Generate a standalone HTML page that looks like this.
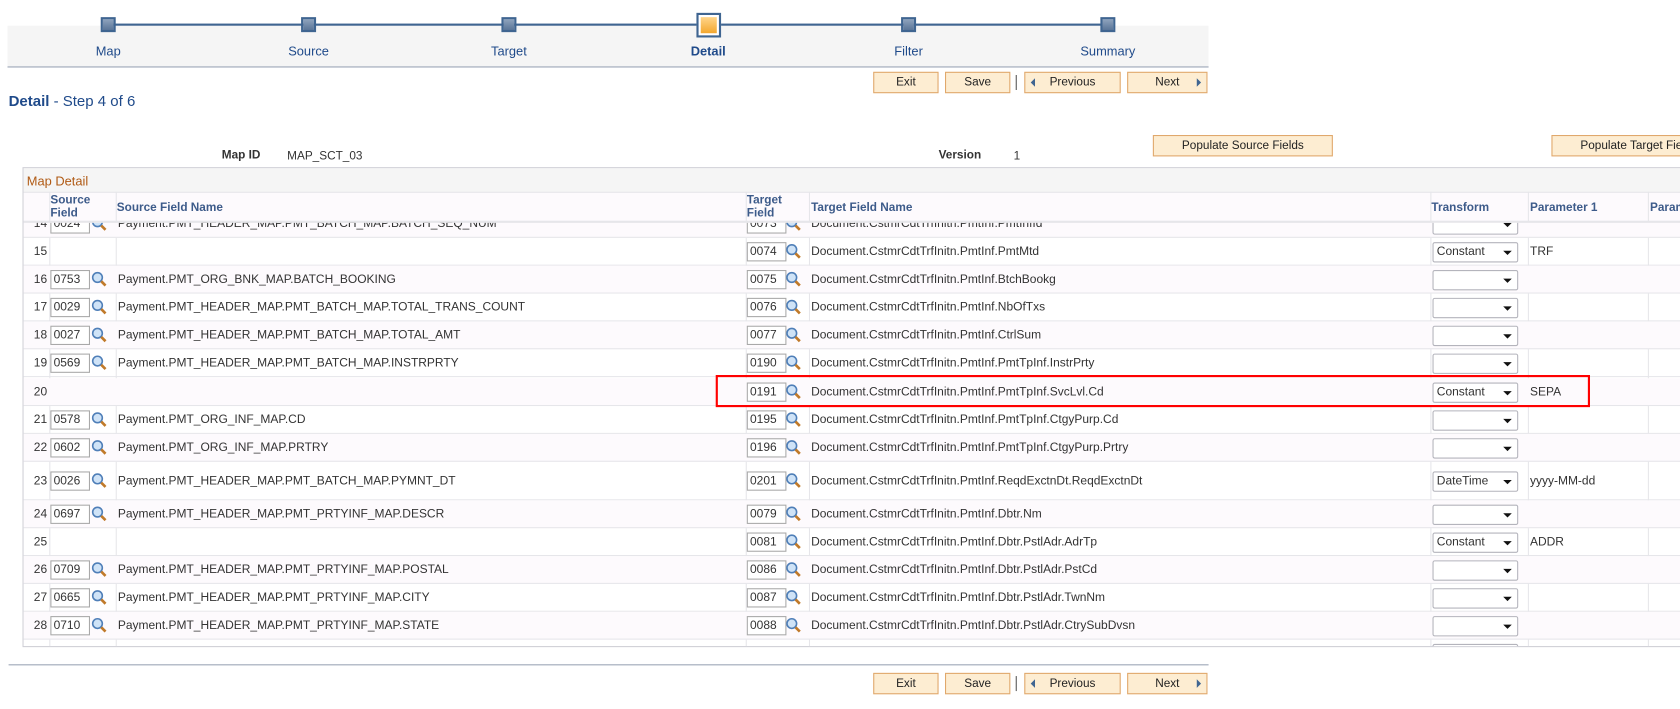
<!DOCTYPE html>
<html><head><meta charset="utf-8">
<style>
*{box-sizing:border-box;margin:0;padding:0}
body{width:1680px;height:709px;background:#fff;font-family:"Liberation Sans",Arial,sans-serif;font-size:11px;color:#333;position:relative;overflow:hidden}
#w{position:absolute;left:0;top:0;width:1568px;height:662px;transform:scale(1.07143);transform-origin:0 0;overflow:hidden}
.a{position:absolute;white-space:nowrap}
.band{left:7px;top:24px;width:1121px;height:39px;background:#f5f5f5;border-bottom:1px solid #9aa3b5}
.line{left:101px;top:22px;width:934px;height:2px;background:#3f6591}
.node{width:14px;height:14px;background:linear-gradient(#8fa3bd,#5a7598);border:2px solid #3f6591;top:16px}
.lbl{top:41px;font-size:12px;color:#1f4a8a;width:120px;text-align:center}
.btn{height:20px;background:#fdedd2;border:1px solid #e0a86c;font-size:11px;color:#222;text-align:center;line-height:18px}
.hdr{font-weight:bold;color:#3d5b8a;font-size:11px;line-height:12px}
.row{left:22px;width:1658px;height:26px;border-bottom:1px solid #e6e6ea}
.row.alt{background:#fdfafd}
.row span{position:absolute;top:7px;font-size:11.2px;white-space:nowrap}
.num{left:0;width:22px;text-align:right}
.in{position:absolute;top:4px;width:37px;height:18px;border:1px solid #a9a9a9;background:#fff;font-size:11.2px;padding-left:2px;line-height:16px}
.mg{position:absolute;top:5px;width:15px;height:15px}
.sel{position:absolute;left:1315px;top:4px;width:80px;height:19px;border:1px solid #b4b4bc;border-radius:2px;background:#fff;font-size:11.2px;line-height:17px;padding-left:3px}
.sel:after{content:"";position:absolute;right:5px;top:7px;border-left:4px solid transparent;border-right:4px solid transparent;border-top:4px solid #111}
</style></head><body>
<div id="w">
<div class="a band"></div>
<div class="a line"></div>
<div class="a node" style="left:94px"></div>
<div class="a node" style="left:281px"></div>
<div class="a node" style="left:468px"></div>
<div class="a" style="left:650px;top:12px;width:23px;height:23px;border:2px solid #3f6591;background:#fff;padding:2px"><div style="width:15px;height:15px;background:linear-gradient(#ffd58a,#f3a72e)"></div></div>
<div class="a node" style="left:841px"></div>
<div class="a node" style="left:1027px"></div>
<div class="a lbl" style="left:41px">Map</div>
<div class="a lbl" style="left:228px">Source</div>
<div class="a lbl" style="left:415px">Target</div>
<div class="a lbl" style="left:601px;font-weight:bold">Detail</div>
<div class="a lbl" style="left:788px">Filter</div>
<div class="a lbl" style="left:974px">Summary</div>

<div class="a btn" style="left:815px;top:67px;width:61px">Exit</div>
<div class="a btn" style="left:882px;top:67px;width:61px">Save</div>
<div class="a" style="left:948px;top:70px;width:1px;height:14px;background:#555"></div>
<div class="a btn" style="left:956px;top:67px;width:90px"><span style="position:absolute;left:5px;top:5px;border-top:4px solid transparent;border-bottom:4px solid transparent;border-right:4px solid #3f6591"></span>Previous</div>
<div class="a btn" style="left:1052px;top:67px;width:75px">Next<span style="position:absolute;right:5px;top:5px;border-top:4px solid transparent;border-bottom:4px solid transparent;border-left:4px solid #3f6591"></span></div>

<div class="a" style="left:8px;top:86px;font-size:14px;color:#1f4a8a"><b>Detail</b> - Step 4 of 6</div>

<div class="a" style="left:207px;top:139px;font-weight:bold;font-size:11px">Map ID</div>
<div class="a" style="left:268px;top:140px;font-size:11px">MAP_SCT_03</div>
<div class="a" style="left:876px;top:139px;font-weight:bold;font-size:11px">Version</div>
<div class="a" style="left:946px;top:140px;font-size:11px">1</div>
<div class="a btn" style="left:1076px;top:126px;width:168px">Populate Source Fields</div>
<div class="a btn" style="left:1448px;top:126px;width:240px;text-align:left;padding-left:26px">Populate Target Fields</div>

<div class="a" style="left:21px;top:156px;width:1660px;height:448px;border:1px solid #cfcfd6;overflow:hidden">
 <div class="a" style="left:0;top:0;width:1660px;height:23px;background:#f5f5f5;border-bottom:1px solid #e3e3e8"></div>
 <div class="a" style="left:3px;top:5px;font-size:12px;color:#b05a14">Map Detail</div>
 <div class="a" style="left:0;top:23px;width:1660px;height:29px;background:#fdfafd;border-bottom:3px solid #e6e6ea"></div>
</div>
<div class="a hdr" style="left:47px;top:181px">Source<br>Field</div>
<div class="a hdr" style="left:109px;top:188px">Source Field Name</div>
<div class="a hdr" style="left:697px;top:181px">Target<br>Field</div>
<div class="a hdr" style="left:757px;top:188px">Target Field Name</div>
<div class="a hdr" style="left:1336px;top:188px">Transform</div>
<div class="a hdr" style="left:1428px;top:188px">Parameter 1</div>
<div class="a hdr" style="left:1540px;top:188px">Parameter 2</div>
<div class="a" style="left:46px;top:179px;width:1px;height:424px;background:#e6e6ea"></div>
<div class="a" style="left:108px;top:179px;width:1px;height:424px;background:#e6e6ea"></div>
<div class="a" style="left:696px;top:179px;width:1px;height:424px;background:#e6e6ea"></div>
<div class="a" style="left:755px;top:179px;width:1px;height:424px;background:#e6e6ea"></div>
<div class="a" style="left:1335px;top:179px;width:1px;height:424px;background:#e6e6ea"></div>
<div class="a" style="left:1426px;top:179px;width:1px;height:424px;background:#e6e6ea"></div>
<div class="a" style="left:1538px;top:179px;width:1px;height:424px;background:#e6e6ea"></div>

<svg width="0" height="0" style="position:absolute"><defs><symbol id="m" viewBox="0 0 15 15"><circle cx="6" cy="6" r="4.5" fill="#cfe3f7" stroke="#4f7fb8" stroke-width="1.5"/><path d="M9.5 9.5L13.5 13.5" stroke="#c07a2a" stroke-width="2.5"/></symbol></defs></svg>

<div class="a" style="left:22px;top:208px;width:1658px;height:395px;overflow:hidden">
<div class="row alt" style="position:absolute;left:0;top:-12px"><span class="num">14</span><div class="in" style="left:25px">0024</div><svg class="mg" style="left:63px"><use href="#m"/></svg><span style="left:88px">Payment.PMT_HEADER_MAP.PMT_BATCH_MAP.BATCH_SEQ_NUM</span><div class="in" style="left:675px">0073</div><svg class="mg" style="left:711px"><use href="#m"/></svg><span style="left:735px">Document.CstmrCdtTrfInitn.PmtInf.PmtInfId</span><div class="sel"></div></div>
<div class="row" style="position:absolute;left:0;top:14px"><span class="num">15</span><div class="in" style="left:675px">0074</div><svg class="mg" style="left:711px"><use href="#m"/></svg><span style="left:735px">Document.CstmrCdtTrfInitn.PmtInf.PmtMtd</span><div class="sel">Constant</div><span style="left:1406px">TRF</span></div>
<div class="row alt" style="position:absolute;left:0;top:40px"><span class="num">16</span><div class="in" style="left:25px">0753</div><svg class="mg" style="left:63px"><use href="#m"/></svg><span style="left:88px">Payment.PMT_ORG_BNK_MAP.BATCH_BOOKING</span><div class="in" style="left:675px">0075</div><svg class="mg" style="left:711px"><use href="#m"/></svg><span style="left:735px">Document.CstmrCdtTrfInitn.PmtInf.BtchBookg</span><div class="sel"></div></div>
<div class="row" style="position:absolute;left:0;top:66px"><span class="num">17</span><div class="in" style="left:25px">0029</div><svg class="mg" style="left:63px"><use href="#m"/></svg><span style="left:88px">Payment.PMT_HEADER_MAP.PMT_BATCH_MAP.TOTAL_TRANS_COUNT</span><div class="in" style="left:675px">0076</div><svg class="mg" style="left:711px"><use href="#m"/></svg><span style="left:735px">Document.CstmrCdtTrfInitn.PmtInf.NbOfTxs</span><div class="sel"></div></div>
<div class="row alt" style="position:absolute;left:0;top:92px"><span class="num">18</span><div class="in" style="left:25px">0027</div><svg class="mg" style="left:63px"><use href="#m"/></svg><span style="left:88px">Payment.PMT_HEADER_MAP.PMT_BATCH_MAP.TOTAL_AMT</span><div class="in" style="left:675px">0077</div><svg class="mg" style="left:711px"><use href="#m"/></svg><span style="left:735px">Document.CstmrCdtTrfInitn.PmtInf.CtrlSum</span><div class="sel"></div></div>
<div class="row" style="position:absolute;left:0;top:118px"><span class="num">19</span><div class="in" style="left:25px">0569</div><svg class="mg" style="left:63px"><use href="#m"/></svg><span style="left:88px">Payment.PMT_HEADER_MAP.PMT_BATCH_MAP.INSTRPRTY</span><div class="in" style="left:675px">0190</div><svg class="mg" style="left:711px"><use href="#m"/></svg><span style="left:735px">Document.CstmrCdtTrfInitn.PmtInf.PmtTpInf.InstrPrty</span><div class="sel"></div></div>
<div class="row alt" style="position:absolute;left:0;top:145px"><span class="num">20</span><div class="in" style="left:675px">0191</div><svg class="mg" style="left:711px"><use href="#m"/></svg><span style="left:735px">Document.CstmrCdtTrfInitn.PmtInf.PmtTpInf.SvcLvl.Cd</span><div class="sel">Constant</div><span style="left:1406px">SEPA</span></div>
<div class="row" style="position:absolute;left:0;top:171px"><span class="num">21</span><div class="in" style="left:25px">0578</div><svg class="mg" style="left:63px"><use href="#m"/></svg><span style="left:88px">Payment.PMT_ORG_INF_MAP.CD</span><div class="in" style="left:675px">0195</div><svg class="mg" style="left:711px"><use href="#m"/></svg><span style="left:735px">Document.CstmrCdtTrfInitn.PmtInf.PmtTpInf.CtgyPurp.Cd</span><div class="sel"></div></div>
<div class="row alt" style="position:absolute;left:0;top:197px"><span class="num">22</span><div class="in" style="left:25px">0602</div><svg class="mg" style="left:63px"><use href="#m"/></svg><span style="left:88px">Payment.PMT_ORG_INF_MAP.PRTRY</span><div class="in" style="left:675px">0196</div><svg class="mg" style="left:711px"><use href="#m"/></svg><span style="left:735px">Document.CstmrCdtTrfInitn.PmtInf.PmtTpInf.CtgyPurp.Prtry</span><div class="sel"></div></div>
<div class="row" style="position:absolute;left:0;top:223px;height:36px"><span class="num" style="top:12px">23</span><div class="in" style="left:25px;top:9px">0026</div><svg class="mg" style="left:63px;top:10px"><use href="#m"/></svg><span style="left:88px;top:12px">Payment.PMT_HEADER_MAP.PMT_BATCH_MAP.PYMNT_DT</span><div class="in" style="left:675px;top:9px">0201</div><svg class="mg" style="left:711px;top:10px"><use href="#m"/></svg><span style="left:735px;top:12px">Document.CstmrCdtTrfInitn.PmtInf.ReqdExctnDt.ReqdExctnDt</span><div class="sel" style="top:9px">DateTime</div><span style="left:1406px;top:12px">yyyy-MM-dd</span></div>
<div class="row alt" style="position:absolute;left:0;top:259px"><span class="num">24</span><div class="in" style="left:25px">0697</div><svg class="mg" style="left:63px"><use href="#m"/></svg><span style="left:88px">Payment.PMT_HEADER_MAP.PMT_PRTYINF_MAP.DESCR</span><div class="in" style="left:675px">0079</div><svg class="mg" style="left:711px"><use href="#m"/></svg><span style="left:735px">Document.CstmrCdtTrfInitn.PmtInf.Dbtr.Nm</span><div class="sel"></div></div>
<div class="row" style="position:absolute;left:0;top:285px"><span class="num">25</span><div class="in" style="left:675px">0081</div><svg class="mg" style="left:711px"><use href="#m"/></svg><span style="left:735px">Document.CstmrCdtTrfInitn.PmtInf.Dbtr.PstlAdr.AdrTp</span><div class="sel">Constant</div><span style="left:1406px">ADDR</span></div>
<div class="row alt" style="position:absolute;left:0;top:311px"><span class="num">26</span><div class="in" style="left:25px">0709</div><svg class="mg" style="left:63px"><use href="#m"/></svg><span style="left:88px">Payment.PMT_HEADER_MAP.PMT_PRTYINF_MAP.POSTAL</span><div class="in" style="left:675px">0086</div><svg class="mg" style="left:711px"><use href="#m"/></svg><span style="left:735px">Document.CstmrCdtTrfInitn.PmtInf.Dbtr.PstlAdr.PstCd</span><div class="sel"></div></div>
<div class="row" style="position:absolute;left:0;top:337px"><span class="num">27</span><div class="in" style="left:25px">0665</div><svg class="mg" style="left:63px"><use href="#m"/></svg><span style="left:88px">Payment.PMT_HEADER_MAP.PMT_PRTYINF_MAP.CITY</span><div class="in" style="left:675px">0087</div><svg class="mg" style="left:711px"><use href="#m"/></svg><span style="left:735px">Document.CstmrCdtTrfInitn.PmtInf.Dbtr.PstlAdr.TwnNm</span><div class="sel"></div></div>
<div class="row alt" style="position:absolute;left:0;top:363px"><span class="num">28</span><div class="in" style="left:25px">0710</div><svg class="mg" style="left:63px"><use href="#m"/></svg><span style="left:88px">Payment.PMT_HEADER_MAP.PMT_PRTYINF_MAP.STATE</span><div class="in" style="left:675px">0088</div><svg class="mg" style="left:711px"><use href="#m"/></svg><span style="left:735px">Document.CstmrCdtTrfInitn.PmtInf.Dbtr.PstlAdr.CtrySubDvsn</span><div class="sel"></div></div>
<div class="row" style="position:absolute;left:0;top:389px"><div class="sel"></div></div>
</div>

<div class="a" style="left:668px;top:350px;width:816px;height:30px;border:2px solid #f00"></div>

<div class="a" style="left:8px;top:620px;width:1120px;height:1px;background:#9aa3b5"></div>
<div class="a btn" style="left:815px;top:628px;width:61px">Exit</div>
<div class="a btn" style="left:882px;top:628px;width:61px">Save</div>
<div class="a" style="left:948px;top:631px;width:1px;height:14px;background:#555"></div>
<div class="a btn" style="left:956px;top:628px;width:90px"><span style="position:absolute;left:5px;top:5px;border-top:4px solid transparent;border-bottom:4px solid transparent;border-right:4px solid #3f6591"></span>Previous</div>
<div class="a btn" style="left:1052px;top:628px;width:75px">Next<span style="position:absolute;right:5px;top:5px;border-top:4px solid transparent;border-bottom:4px solid transparent;border-left:4px solid #3f6591"></span></div>
</div>
</body></html>
